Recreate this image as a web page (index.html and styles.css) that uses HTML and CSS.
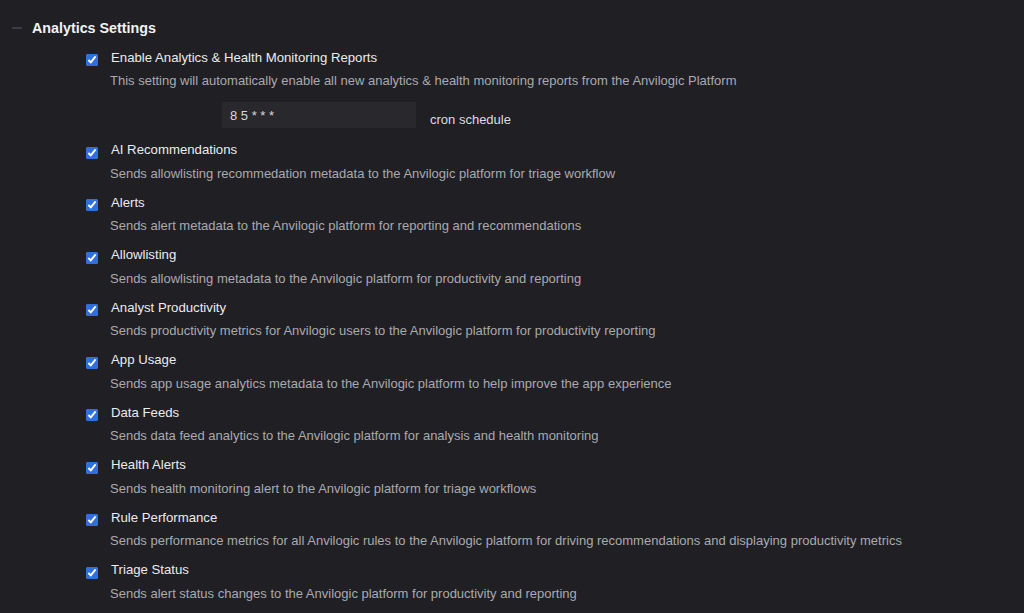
FILE: index.html
```html
<!DOCTYPE html>
<html lang="en">
<head>
  <meta charset="UTF-8" />
  <meta name="viewport" content="width=device-width, initial-scale=1.0" />
  <title>Analytics Settings</title>
  <link rel="stylesheet" href="styles.css">
</head>
<body>
  <div class="section">
    <div class="section-head">
      <span class="collapse"></span>
      <h2>Analytics Settings</h2>
    </div>

    <div class="options">
      <div class="option">
        <label class="option-title"><input type="checkbox" checked /> <span>Enable Analytics &amp; Health Monitoring Reports</span></label>
        <p>This setting will automatically enable all new analytics &amp; health monitoring reports from the Anvilogic Platform</p>
        <div class="cron">
          <input type="text" value="8 5 * * *" />
          <span>cron schedule</span>
        </div>
      </div>
      <div class="option">
        <label class="option-title"><input type="checkbox" checked /> <span>AI Recommendations</span></label>
        <p>Sends allowlisting recommedation metadata to the Anvilogic platform for triage workflow</p>
      </div>
      <div class="option">
        <label class="option-title"><input type="checkbox" checked /> <span>Alerts</span></label>
        <p>Sends alert metadata to the Anvilogic platform for reporting and recommendations</p>
      </div>
      <div class="option">
        <label class="option-title"><input type="checkbox" checked /> <span>Allowlisting</span></label>
        <p>Sends allowlisting metadata to the Anvilogic platform for productivity and reporting</p>
      </div>
      <div class="option">
        <label class="option-title"><input type="checkbox" checked /> <span>Analyst Productivity</span></label>
        <p>Sends productivity metrics for Anvilogic users to the Anvilogic platform for productivity reporting</p>
      </div>
      <div class="option">
        <label class="option-title"><input type="checkbox" checked /> <span>App Usage</span></label>
        <p>Sends app usage analytics metadata to the Anvilogic platform to help improve the app experience</p>
      </div>
      <div class="option">
        <label class="option-title"><input type="checkbox" checked /> <span>Data Feeds</span></label>
        <p>Sends data feed analytics to the Anvilogic platform for analysis and health monitoring</p>
      </div>
      <div class="option">
        <label class="option-title"><input type="checkbox" checked /> <span>Health Alerts</span></label>
        <p>Sends health monitoring alert to the Anvilogic platform for triage workflows</p>
      </div>
      <div class="option">
        <label class="option-title"><input type="checkbox" checked /> <span>Rule Performance</span></label>
        <p>Sends performance metrics for all Anvilogic rules to the Anvilogic platform for driving recommendations and displaying productivity metrics</p>
      </div>
      <div class="option">
        <label class="option-title"><input type="checkbox" checked /> <span>Triage Status</span></label>
        <p>Sends alert status changes to the Anvilogic platform for productivity and reporting</p>
      </div>
    </div>
  </div>
</body>
</html>
```

FILE: styles.css
```css
* { box-sizing: border-box; }
html, body { height: 100%; }
body {
  margin: 0;
  background: #1f1f24;
  color: #e6e6e8;
  font-family: "Liberation Sans", Arial, sans-serif;
  overflow: hidden;
}

.section { padding: 19px 0 0 12px; }

.section-head {
  display: flex;
  align-items: center;
  gap: 10px;
  height: 17px;
}
.collapse {
  width: 10px;
  height: 2px;
  background: #3c3c42;
}
.section-head h2 {
  margin: 0;
  font-size: 14.3px;
  font-weight: 700;
  color: #f2f2f4;
}

.options {
  padding: 13px 0 0 74px;
  display: flex;
  flex-direction: column;
  gap: 12.5px;
}

.option-title {
  display: flex;
  align-items: center;
  gap: 13px;
  font-size: 13.2px;
  color: #ececee;
  height: 16px;
}
.option-title input {
  align-self: flex-start;
  margin: 5px 0 0 0;
  width: 12px;
  height: 12px;
  accent-color: #2f6fde;
}
.option p {
  margin: 8px 0 0 24px;
  font-size: 13px;
  color: #aaaaaf;
  line-height: 16px;
}

.cron {
  display: flex;
  align-items: center;
  gap: 14px;
  margin: 13px 0 1px 136px;
}
.cron input {
  width: 194px;
  height: 26px;
  border: none;
  background: #28282d;
  color: #d8d8dc;
  font-family: inherit;
  font-size: 13px;
  padding: 0 8px;
  outline: none;
}
.cron span {
  font-size: 13px;
  color: #dcdce0;
  margin-top: 8px;
}
```
